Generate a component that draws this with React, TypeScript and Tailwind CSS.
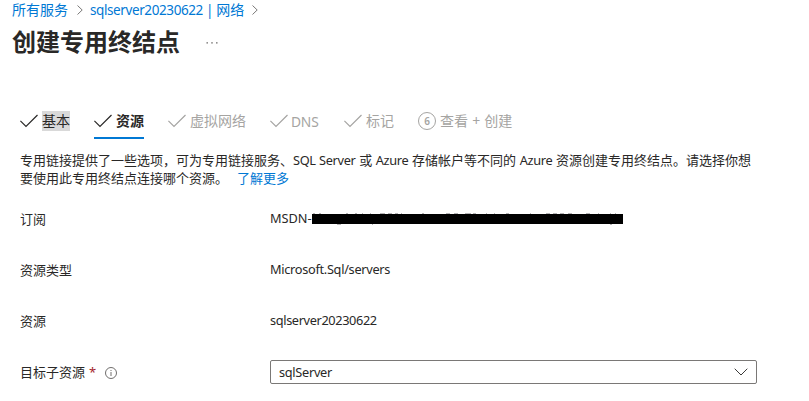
import type { ReactNode } from "react";

function Check() {
  return (
    <svg width="18" height="14" viewBox="0 0 18 14" fill="none" stroke="currentColor" strokeWidth="1.2" className="shrink-0">
      <path d="M0.4 6.8 6 12.4 17.5 1" />
    </svg>
  );
}

function Crumb() {
  return (
    <svg width="6" height="10" viewBox="0 0 6 10" fill="none" stroke="#6b6a69" strokeWidth="0.9" className="shrink-0">
      <path d="M0.5 0.5 5.2 5 0.5 9.5" />
    </svg>
  );
}

function Latin({ children }: { children: ReactNode }) {
  return <span className="text-[12.75px] tracking-[-0.3px]">{children}</span>;
}

function Row({ label, children }: { label: ReactNode; children: ReactNode }) {
  return (
    <div className="flex h-[51px] items-center">
      <div className="flex w-[250px] shrink-0 items-center">{label}</div>
      {children}
    </div>
  );
}

export default function App() {
  return (
    <div className="h-[401px] w-[809px] overflow-hidden bg-white font-['Noto_Sans','Noto_Sans_CJK_SC',sans-serif] text-[13px] leading-[18px] whitespace-nowrap text-[#292827]">
      <nav className="flex h-[19px] items-center pl-3 text-sm leading-5 text-[#0078d4]">
        <a className="w-[65px]">所有服务</a>
        <Crumb />
        <a className="ml-[7px] w-[162px]">
          <span className="text-[13.5px] tracking-[-0.4px]">sqlserver20230622 | </span>网络
        </a>
        <Crumb />
      </nav>
      <header className="flex h-[46px] items-center pl-3">
        <h1 className="text-2xl leading-8 font-bold">创建专用终结点</h1>
        <svg width="12" height="2" viewBox="0 0 12 2" fill="#605e5c" className="mt-px ml-[26px]">
          <path d="M0.5 0.2h1.4v1.4H0.5zM5.3 0.2h1.4v1.4H5.3zM10.1 0.2h1.4v1.4h-1.4z" />
        </svg>
      </header>
      <div className="mt-[39px] flex h-[35px] pl-5 text-sm leading-5 text-[#a5a4a2]">
        <div className="flex h-[33px] w-[74px] items-center gap-1 text-[#292827]">
          <Check />
          <span className="bg-[#d9d9d9]">基本</span>
        </div>
        <div className="flex h-[35px] w-[50px] items-center gap-1 border-b-2 border-[#0078d4] font-bold text-[#292827]">
          <Check />
          <span>资源</span>
        </div>
        <div className="ml-6 flex h-[33px] w-[102px] items-center gap-1">
          <Check />
          <span>虚拟网络</span>
        </div>
        <div className="flex h-[33px] w-[74px] items-center gap-[3px]">
          <Check />
          <span className="mt-0.5 text-[13.8px] tracking-[-0.2px]">DNS</span>
        </div>
        <div className="flex h-[33px] w-[74px] items-center gap-1">
          <Check />
          <span>标记</span>
        </div>
        <div className="flex h-[33px] items-center gap-1">
          <span className="flex size-[18px] items-center justify-center rounded-full border border-[#a5a4a2] text-[10px] leading-none font-semibold">6</span>
          <span className="[word-spacing:0.5px]">查看 + 创建</span>
        </div>
      </div>
      <main className="pl-5">
        <p className="mt-3 h-[42px]">
          <span className="block h-[18px] [word-spacing:0.2px]">
            专用链接提供了一些选项，可为专用链接服务、<Latin>SQL Server</Latin> 或 <Latin>Azure</Latin> 存储帐户等不同的 <Latin>Azure</Latin> 资源创建专用终结点。请选择你想
          </span>
          <span className="block">
            要使用此专用终结点连接哪个资源。<a className="ml-[9px] text-[#0078d4]">了解更多</a>
          </span>
        </p>
        <Row label="订阅">
          <span className="mb-0.5 w-[42px] text-[12.75px]">MSDN-</span>
          <svg width="311" height="14" viewBox="0 0 311 14" className="shrink-0">
            <path d="M0 2H311V12H0Z" fill="#000" />
            <path
              d="M1 1.5h2M7 1.5h2M34 1.5h2M43 1.5h2M50 1.5h1M58 1.5h1M68 1.5h5M76 1.5h4M83 1.5h3M89 1.5h1M110 1.5h2M134 1.5h4M142 1.5h4M153 1.5h6M161 1.5h3M174 1.5h1M182 1.5h1M194 1.5h3M218 1.5h1M234 1.5h4M241 1.5h4M248 1.5h4M256 1.5h4M274 1.5h4M286 1.5h1M298 1.5h1M303 1.5h1M25 12.5h4M60 12.5h1M298 12.5h2"
              stroke="#b5b4b6"
            />
          </svg>
        </Row>
        <Row label="资源类型">
          <div className="mb-0.5 leading-[18px]"><Latin>Microsoft.Sql/servers</Latin></div>
        </Row>
        <Row label="资源">
          <div className="mb-0.5 text-[12.75px] leading-[18px] tracking-[-0.37px]">sqlserver20230622</div>
        </Row>
        <Row
          label={
            <>
              目标子资源<span className="ml-1 text-[#a4262c]">*</span>
              <svg width="12" height="12" viewBox="0 0 12 12" fill="none" stroke="#605e5c" strokeWidth="0.9" className="mt-0.5 ml-[9px]">
                <circle cx="6" cy="6" r="5.5" />
                <path d="M6 5v4M6 3v1" />
              </svg>
            </>
          }
        >
          <div className="flex h-6 w-[487px] items-center justify-between rounded-[2px] border border-[#7a7876] pt-px pr-2 pl-2">
            <Latin>sqlServer</Latin>
            <svg width="14" height="8" viewBox="0 0 14 8" fill="none" stroke="#3b3a39" strokeWidth="1">
              <path d="M0.7 0.7 7 7 13.3 0.7" />
            </svg>
          </div>
        </Row>
      </main>
    </div>
  );
}
